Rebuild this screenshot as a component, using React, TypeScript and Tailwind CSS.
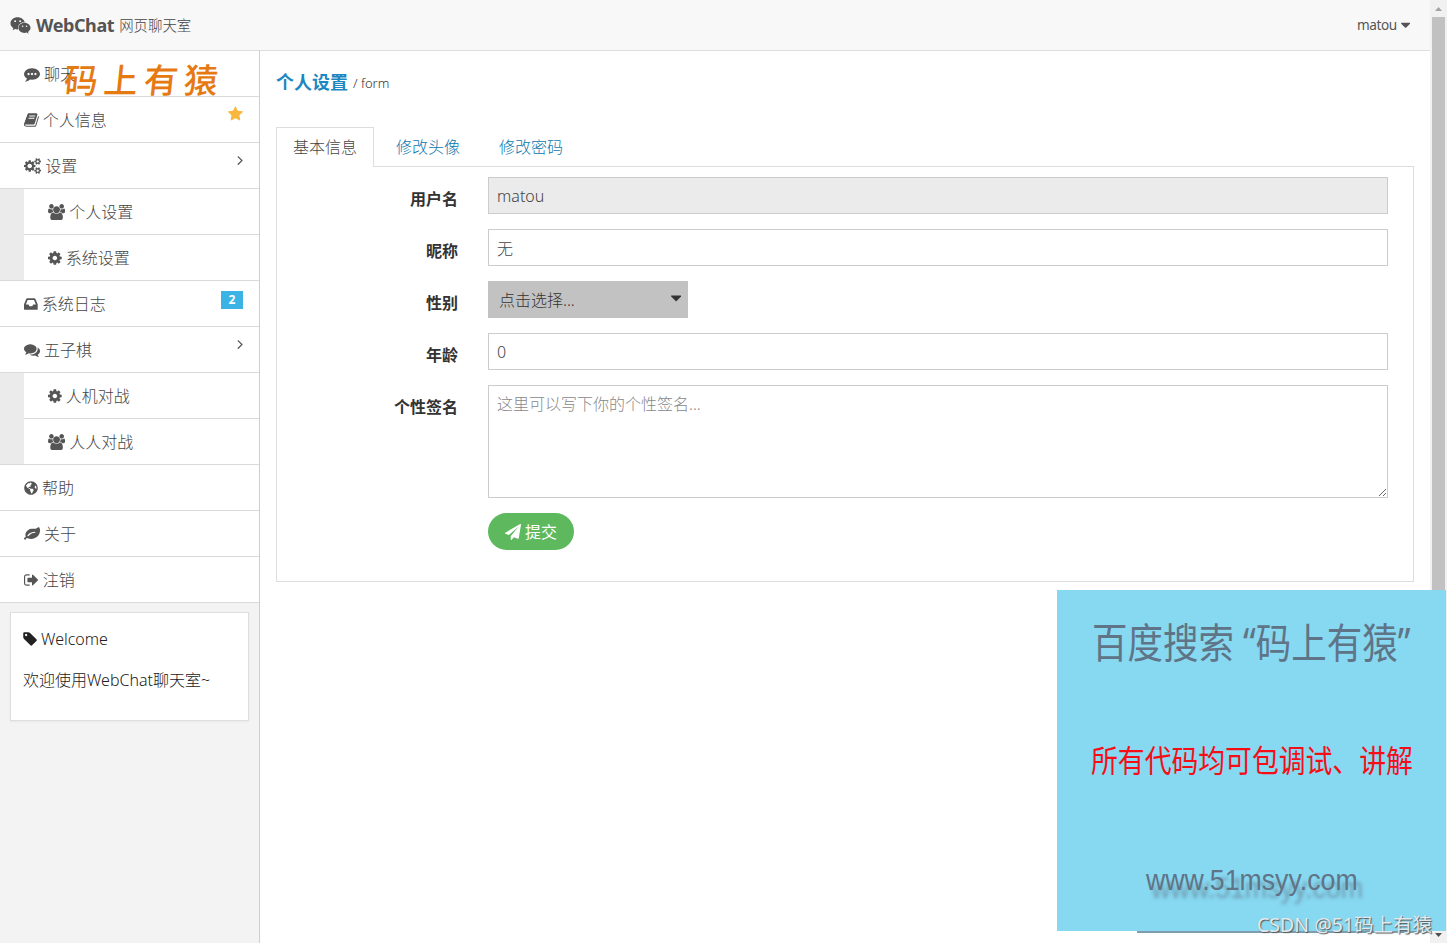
import type { ReactNode } from "react";
import { FaGlobeAmericas, FaWeixin } from "react-icons/fa";

interface IconShape {
  x: number;
  width: number;
  path: string;
}

// Glyphs share a 1792 unit em box, x and width give the advance of each one
const icons = {
  commenting: {
    x: 0,
    width: 1792,
    path: "M640 896q0-53-37.500-90.500t-90.500-37.500-90.500 37.500-37.500 90.500 37.500 90.500 90.500 37.500 90.500-37.500 37.500-90.500zm384 0q0-53-37.500-90.500t-90.500-37.500-90.500 37.500-37.500 90.500 37.500 90.500 90.500 37.500 90.500-37.500 37.500-90.500zm384 0q0-53-37.500-90.500t-90.500-37.500-90.500 37.500-37.500 90.500 37.500 90.500 90.500 37.500 90.500-37.500 37.500-90.500zm384 0q0 174-120 321.500t-326 233-450 85.500q-110 0-211-18-173 173-435 229-52 10-86 13-12 1-22-6t-13-18q-4-15 20-37 5-5 23.500-21.500t25.500-23.500 23.500-25.500 24-31.500 20.500-37 20-48 14.500-57.500 12.500-72.500q-146-90-229.500-216.500t-83.500-269.500q0-174 120-321.500t326-233 450-85.500 450 85.500 326 233 120 321.500z",
  },
  book: {
    x: 64,
    width: 1664,
    path: "M1703 478q40 57 18 129l-275 906q-19 64-76.500 107.500t-122.500 43.500h-923q-77 0-148.500-53.500t-99.500-131.500q-24-67-2-127 0-4 3-27t4-37q1-8-3-21.500t-3-19.500q2-11 8-21t16.500-23.500 16.500-23.500q23-38 45-91.500t30-91.500q3-10 .5-30t-.5-28q3-11 17-28t17-23q21-36 42-92t25-90q1-9-2.500-32t.5-28q4-13 22-30.500t22-22.500q19-26 42.500-84.500t27.500-96.500q1-8-3-25.500t-2-26.500q2-8 9-18t18-23 17-21q8-12 16.500-30.500t15-35 16-36 19.500-32 26.500-23.500 36-11.500 47.500 5.500l-1 3q38-9 51-9h761q74 0 114 56t18 130l-274 906q-36 119-71.500 153.500t-128.500 34.500h-869q-27 0-38 15-11 16-1 43 24 70 144 70h923q29 0 56-15.500t35-41.500l300-987q7-22 5-57 38 15 59 43zm-1064 2q-4 13 2 22.500t20 9.500h608q13 0 25.500-9.500t16.500-22.500l21-64q4-13-2-22.500t-20-9.500h-608q-13 0-25.500 9.500t-16.500 22.500zm-83 256q-4 13 2 22.500t20 9.500h608q13 0 25.500-9.500t16.500-22.500l21-64q4-13-2-22.500t-20-9.500h-608q-13 0-25.500 9.500t-16.500 22.500z",
  },
  cogs: {
    x: -64,
    width: 1920,
    path: "M832 896q0-106-75-181t-181-75-181 75-75 181 75 181 181 75 181-75 75-181zm768 512q0-52-38-90t-90-38-90 38-38 90q0 53 37.500 90.500t90.500 37.500 90.500-37.500 37.500-90.500zm0-1024q0-52-38-90t-90-38-90 38-38 90q0 53 37.500 90.500t90.500 37.500 90.500-37.500 37.500-90.500zm-384 421v185q0 10-7 19.500t-16 10.500l-155 24q-11 35-32 76 34 48 90 115 7 11 7 20 0 12-7 19-23 30-82.500 89.500t-78.500 59.500q-11 0-21-7l-115-90q-37 19-77 31-11 108-23 155-7 24-30 24h-186q-11 0-20-7.500t-10-17.500l-23-153q-34-10-75-31l-118 89q-7 7-20 7-11 0-21-8-144-133-144-160 0-9 7-19 10-14 41-53t47-61q-23-44-35-82l-152-24q-10-1-17-9.500t-7-19.500v-185q0-10 7-19.500t16-10.500l155-24q11-35 32-76-34-48-90-115-7-11-7-20 0-12 7-20 22-30 82-89t79-59q11 0 21 7l115 90q34-18 77-32 11-108 23-154 7-24 30-24h186q11 0 20 7.500t10 17.500l23 153q34 10 75 31l118-89q8-7 20-7 11 0 21 8 144 133 144 160 0 8-7 19-12 16-42 54t-45 60q23 48 34 82l152 23q10 2 17 10.500t7 19.500zm640 533v140q0 16-149 31-12 27-30 52 51 113 51 138 0 4-4 7-122 71-124 71-8 0-46-47t-52-68q-20 2-30 2t-30-2q-14 21-52 68t-46 47q-2 0-124-71-4-3-4-7 0-25 51-138-18-25-30-52-149-15-149-31v-140q0-16 149-31 13-29 30-52-51-113-51-138 0-4 4-7 4-2 35-20t59-34 30-16q8 0 46 46.500t52 67.500q20-2 30-2t30 2q51-71 92-112l6-2q4 0 124 70 4 3 4 7 0 25-51 138 17 23 30 52 149 15 149 31zm0-1024v140q0 16-149 31-12 27-30 52 51 113 51 138 0 4-4 7-122 71-124 71-8 0-46-47t-52-68q-20 2-30 2t-30-2q-14 21-52 68t-46 47q-2 0-124-71-4-3-4-7 0-25 51-138-18-25-30-52-149-15-149-31v-140q0-16 149-31 13-29 30-52-51-113-51-138 0-4 4-7 4-2 35-20t59-34 30-16q8 0 46 46.500t52 67.500q20-2 30-2t30 2q51-71 92-112l6-2q4 0 124 70 4 3 4 7 0 25-51 138 17 23 30 52 149 15 149 31z",
  },
  users: {
    x: 64,
    width: 1920,
    path: "M657 896q-162 5-265 128h-134q-82 0-138-40.500t-56-118.500q0-353 124-353 6 0 43.500 21t97.500 42.500 119 21.500q67 0 133-23-5 37-5 66 0 139 81 256zm1071 637q0 120-73 189.500t-194 69.500h-874q-121 0-194-69.500t-73-189.500q0-53 3.500-103.500t14-109 26.500-108.500 43-97.500 62-81 85.500-53.500 111.500-20q10 0 43 21.500t73 48 107 48 135 21.500 135-21.500 107-48 73-48 43-21.500q61 0 111.500 20t85.500 53.500 62 81 43 97.500 26.500 108.500 14 109 3.500 103.500zm-1024-1277q0 106-75 181t-181 75-181-75-75-181 75-181 181-75 181 75 75 181zm704 384q0 159-112.500 271.500t-271.500 112.500-271.500-112.500-112.500-271.500 112.500-271.500 271.500-112.500 271.500 112.500 112.500 271.500zm576 225q0 78-56 118.500t-138 40.500h-134q-103-123-265-128 81-117 81-256 0-29-5-66 66 23 133 23 59 0 119-21.500t97.500-42.500 43.500-21q124 0 124 353zm-128-609q0 106-75 181t-181 75-181-75-75-181 75-181 181-75 181 75 75 181z",
  },
  cog: {
    x: 128,
    width: 1536,
    path: "M1152 896q0-106-75-181t-181-75-181 75-75 181 75 181 181 75 181-75 75-181zm512-109v222q0 12-8 23t-20 13l-185 28q-19 54-39 91 35 50 107 138 10 12 10 25t-9 23q-27 37-99 108t-94 71q-12 0-26-9l-138-108q-44 23-91 38-16 136-29 186-7 28-36 28h-222q-14 0-24.500-8.500t-11.500-21.500l-28-184q-49-16-90-37l-141 107q-10 9-25 9-14 0-25-11-126-114-165-168-7-10-7-23 0-12 8-23 15-21 51-66.500t54-70.500q-27-50-41-99l-183-27q-13-2-21-12.500t-8-23.500v-222q0-12 8-23t19-13l186-28q14-46 39-92-40-57-107-138-10-12-10-24 0-10 9-23 26-36 98.500-107.500t94.500-71.500q13 0 26 10l138 107q44-23 91-38 16-136 29-186 7-28 36-28h222q14 0 24.500 8.500t11.500 21.500l28 184q49 16 90 37l142-107q9-9 24-9 13 0 25 10 129 119 165 170 7 8 7 22 0 12-8 23-15 21-51 66.500t-54 70.500q26 50 41 98l183 28q13 2 21 12.500t8 23.500z",
  },
  inbox: {
    x: 128,
    width: 1536,
    path: "M1151 960h316q-1-3-2.500-8.500t-2.500-7.500l-212-496h-708l-212 496q-1 3-2.500 8.500t-2.500 7.500h316l95 192h320zm513 30v482q0 26-19 45t-45 19h-1408q-26 0-45-19t-19-45v-482q0-62 25-123l238-552q10-25 36.500-42t52.500-17h832q26 0 52.500 17t36.500 42l238 552q25 61 25 123z",
  },
  comments: {
    x: 0,
    width: 1792,
    path: "M1408 768q0 139-94 257t-256.500 186.500-353.500 68.500q-86 0-176-16-124 88-278 128-36 9-86 16h-3q-11 0-20.500-8t-11.500-21q-1-3-1-6.500t.5-6.500 2-6l2.500-5 3.500-5.500 4-5 4.500-5 4-4.500q5-6 23-25t26-29.500 22.500-29 25-38.500 20.500-44q-124-72-195-177t-71-224q0-139 94-257t256.500-186.500 353.500-68.500 353.500 68.500 256.500 186.500 94 257zm384 256q0 120-71 224.500t-195 176.500q10 24 20.500 44t25 38.500 22.500 29 26 29.500 23 25q1 1 4 4.500t4.500 5 4 5 3.500 5.500l2.500 5 2 6 .5 6.500-1 6.500q-3 14-13 22t-22 7q-50-7-86-16-154-40-278-128-90 16-176 16-271 0-472-132 58 4 88 4 161 0 309-45t264-129q125-92 192-212t67-254q0-77-23-152 129 71 204 178t75 230z",
  },
  leaf: {
    x: 0,
    width: 1792,
    path: "M1280 704q0-26-19-45t-45-19q-172 0-318 49.500t-259.500 134-235.500 219.500q-19 21-19 45 0 26 19 45t45 19q24 0 45-19 27-24 74-71t67-66q137-124 268.500-176t313.500-52q26 0 45-19t19-45zm512-198q0 95-20 193-46 224-184.500 383t-357.500 268q-214 108-438 108-148 0-286-47-15-5-88-42t-96-37q-16 0-39.500 32t-45 70-52.500 70-60 32q-43 0-63.500-17.500t-45.500-59.500q-2-4-6-11t-5.500-10-3-9.500-1.500-13.500q0-35 31-73.500t68-65.500 68-56 31-48q0-4-14-38t-16-44q-9-51-9-104 0-115 43.500-220t119-184.500 170.500-139 204-95.500q55-18 145-25.500t179.500-9 178.500-6 163.500-24 113.500-56.500l29.500-29.500 29.500-28 27-20 36.500-16 43.500-4.500q39 0 70.500 46t47.500 112 24 124 8 96z",
  },
  signOut: {
    x: 64,
    width: 1664,
    path: "M704 1440q0 4 1 20t.5 26.500-3 23.500-10 19.500-20.500 6.500h-320q-119 0-203.500-84.500t-84.500-203.500v-704q0-119 84.500-203.500t203.500-84.500h320q13 0 22.500 9.500t9.500 22.500q0 4 1 20t.5 26.500-3 23.500-10 19.500-20.500 6.500h-320q-66 0-113 47t-47 113v704q0 66 47 113t113 47h312l11.500 1 11.500 3 8 5.500 7 9 2 13.500zm928-544q0 26-19 45l-544 544q-19 19-45 19t-45-19-19-45v-288h-448q-26 0-45-19t-19-45v-384q0-26 19-45t45-19h448v-288q0-26 19-45t45-19 45 19l544 544q19 19 19 45z",
  },
  tag: {
    x: 100,
    width: 1580,
    path: "M576 448q0-53-37.500-90.500t-90.500-37.500-90.500 37.500-37.500 90.500 37.500 90.500 90.500 37.500 90.500-37.500 37.500-90.500zm1067 576q0 53-37 90l-491 492q-39 37-91 37-53 0-90-37l-715-716q-38-37-64.500-101t-26.500-117v-416q0-52 38-90t90-38h416q53 0 117 26.500t102 64.500l715 714q37 39 37 91z",
  },
  paperPlane: {
    x: 0,
    width: 1792,
    path: "M1764 11q33 24 27 64l-256 1536q-5 29-32 45-14 8-31 8-11 0-24-5l-453-185-242 295q-18 23-49 23-13 0-22-4-19-7-30.500-23.500t-11.500-36.500v-349l864-1059-1069 925-395-162q-37-14-40-55-2-40 32-59l1664-960q15-9 32-9 20 0 36 11z",
  },
  star: {
    x: 64,
    width: 1664,
    path: "M1728 647q0 22-26 48l-363 354 86 500q1 7 1 20 0 21-10.500 35.500t-30.500 14.500q-19 0-40-12l-449-236-449 236q-22 12-40 12-21 0-31.500-14.500t-10.500-35.500q0-6 2-20l86-500-364-354q-25-27-25-48 0-37 56-46l502-73 225-455q19-41 49-41t49 41l225 455 502 73q56 9 56 46z",
  },
  angleRight: {
    x: 536,
    width: 686,
    path: "M1171 960q0 13-10 23l-466 466q-10 10-23 10t-23-10l-50-50q-10-10-10-23t10-23l393-393-393-393q-10-10-10-23t10-23l50-50q10-10 23-10t23 10l466 466q10 10 10 23z",
  },
  caretDown: {
    x: 384,
    width: 1024,
    path: "M1408 704q0 26-19 45l-448 448q-19 19-45 19t-45-19l-448-448q-19-19-19-45t19-45 45-19h896q26 0 45 19t19 45z",
  },
} satisfies Record<string, IconShape>;

type IconName = keyof typeof icons;

function Icon({ name, size = 16 }: { name: IconName; size?: number }) {
  const { x, width, path } = icons[name];
  return (
    <svg
      viewBox={`${x} 0 ${width} 1792`}
      width={(width * size) / 1792}
      height={size}
      fill="currentColor"
      className="shrink-0"
    >
      <path d={path} />
    </svg>
  );
}

interface MenuItem {
  icon: IconName | "globe";
  label: string;
  extra?: ReactNode;
  children?: MenuItem[];
}

const arrow = (
  <span className="mb-3">
    <Icon name="angleRight" />
  </span>
);

const menu: MenuItem[] = [
  { icon: "commenting", label: "聊天" },
  {
    icon: "book",
    label: "个人信息",
    extra: (
      <span className="mb-3 text-[#f8b73e]">
        <Icon name="star" />
      </span>
    ),
  },
  {
    icon: "cogs",
    label: "设置",
    extra: arrow,
    children: [
      { icon: "users", label: "个人设置" },
      { icon: "cog", label: "系统设置" },
    ],
  },
  {
    icon: "inbox",
    label: "系统日志",
    extra: (
      <span className="mb-2 flex h-[18px] w-[22px] items-center justify-center bg-[#3bb4e5] text-xs font-bold text-white">
        2
      </span>
    ),
  },
  {
    icon: "comments",
    label: "五子棋",
    extra: arrow,
    children: [
      { icon: "cog", label: "人机对战" },
      { icon: "users", label: "人人对战" },
    ],
  },
  { icon: "globe", label: "帮助" },
  { icon: "leaf", label: "关于" },
  { icon: "signOut", label: "注销" },
];

function MenuRow({ item }: { item: MenuItem }) {
  return (
    <li>
      <a className="flex h-[46px] items-center justify-between border-b border-[#dadada] bg-white pr-4 pl-6 text-[#555]">
        <span className="flex items-center gap-1">
          {item.icon === "globe" ? (
            <FaGlobeAmericas size={14} />
          ) : (
            <Icon name={item.icon} />
          )}
          <span className="text-[#444]">{item.label}</span>
        </span>
        {item.extra}
      </a>
      {item.children && (
        <ul className="border-b border-[#dadada] bg-[#ebebeb] pl-6 [&>li:last-child>a]:h-[45px] [&>li:last-child>a]:border-b-0">
          {item.children.map((child) => (
            <MenuRow key={child.label} item={child} />
          ))}
        </ul>
      )}
    </li>
  );
}

function FormRow({ label, children }: { label: string; children: ReactNode }) {
  return (
    <div className="flex gap-[30px]">
      <label className="w-[181px] shrink-0 pt-2.5 text-right leading-6 font-bold text-[#333]">
        {label}
      </label>
      <div className="flex flex-1">{children}</div>
    </div>
  );
}

function Header() {
  return (
    <header className="flex h-[51px] shrink-0 items-center justify-between border-b border-[#ddd] bg-[#f8f8f8] pr-5 pl-2.5 text-[#555]">
      <div className="flex items-center">
        <FaWeixin size={21} />
        <strong className="ml-[5px] text-[18px] font-bold tracking-[-0.4px]">
          WebChat
        </strong>
        <span className="mt-0.5 ml-[5px] text-[14.4px] text-[#444]">
          网页聊天室
        </span>
      </div>
      <div className="flex items-center gap-1 text-[13.6px] tracking-[-0.4px]">
        <span className="font-normal">matou</span>
        <Icon name="caretDown" />
      </div>
    </header>
  );
}

function Sidebar() {
  return (
    <aside className="w-[260px] shrink-0 border-r border-[#cecece] bg-[#f3f3f3]">
      <ul>
        {menu.map((item) => (
          <MenuRow key={item.label} item={item} />
        ))}
      </ul>
      <div className="mt-[9px] mr-2.5 ml-2.5 h-[109px] border border-[#dedede] bg-white px-3 pt-3.5 text-[#222] shadow-xs">
        <p className="flex items-center gap-1 leading-6">
          <Icon name="tag" />
          <span>Welcome</span>
        </p>
        <p className="mt-[17px] leading-6">欢迎使用WebChat聊天室~</p>
      </div>
    </aside>
  );
}

function SettingsForm() {
  return (
    <form className="flex h-[416px] flex-col gap-[15px] border border-[#ddd] pt-2.5 pr-[25px]">
      <FormRow label="用户名">
        <input
          disabled
          defaultValue="matou"
          className="h-[37px] flex-1 border border-[#ccc] bg-[#ebebeb] px-2 text-[#444]"
        />
      </FormRow>
      <FormRow label="昵称">
        <input
          defaultValue="无"
          className="h-[37px] flex-1 border border-[#ccc] px-2 text-[#444]"
        />
      </FormRow>
      <FormRow label="性别">
        <button
          type="button"
          className="flex h-[37px] w-[200px] items-center justify-between bg-[#c2c2c2] pr-[7px] pl-[11px] text-[#333]"
        >
          <span>点击选择...</span>
          <span className="mb-1">
            <Icon name="caretDown" size={18} />
          </span>
        </button>
      </FormRow>
      <FormRow label="年龄">
        <input
          defaultValue="0"
          className="h-[37px] flex-1 border border-[#ccc] px-2 text-[#444]"
        />
      </FormRow>
      <FormRow label="个性签名">
        <textarea
          placeholder="这里可以写下你的个性签名..."
          className="h-[113px] flex-1 border border-[#ccc] px-2 py-1.5 placeholder:text-[#888]"
        />
      </FormRow>
      <div className="flex pl-[211px]">
        <button
          type="button"
          className="flex h-[37px] w-[86px] items-center justify-center gap-1 rounded-full bg-[#5eb95e] font-normal text-white"
        >
          <Icon name="paperPlane" />
          <span>提交</span>
        </button>
      </div>
    </form>
  );
}

function Content() {
  return (
    <main className="flex-1 pt-[18px] pr-4 pl-4">
      <div className="flex h-[27px] items-center text-[#333]">
        <strong className="text-[18px] font-bold text-[#1c87c0]">
          个人设置
        </strong>
        <small className="mt-0.5 ml-[5px] text-[13px]">/ form</small>
      </div>
      <div className="mt-[31px] flex gap-[5px]">
        <a className="-mb-px h-10 w-[98px] border border-b-0 border-[#ddd] bg-white pt-[7px] text-center text-[#444]">
          基本信息
        </a>
        <a className="w-[98px] pt-2 text-center text-[#0b76ad]">修改头像</a>
        <a className="w-[98px] pt-2 text-center text-[#0b76ad]">修改密码</a>
      </div>
      <SettingsForm />
    </main>
  );
}

function Scrollbar() {
  return (
    <div className="flex w-[17px] shrink-0 flex-col items-center bg-[#f1f1f1]">
      <div className="flex h-[17px] items-center">
        <svg width="7" height="4" fill="#a3a3a3">
          <path d="M0 4 3.500 0 7 4z" />
        </svg>
      </div>
      <div className="w-[13px] flex-1 bg-[#c1c1c1]" />
      <div className="flex h-[17px] items-center">
        <svg width="7" height="4" fill="#505050">
          <path d="M0 0 3.500 4 7 0z" />
        </svg>
      </div>
    </div>
  );
}

function Banner() {
  return (
    <div className="absolute top-[590px] left-[1057px] h-[341px] w-[389px] bg-[#87d8f1] font-normal whitespace-nowrap text-[#5f7486]">
      <p className="mt-[22px] ml-[35px] origin-left scale-x-[.865] text-[41px] leading-[60px]">
        百度搜索 “码上有猿”
      </p>
      <p className="mt-[63px] ml-[34px] origin-left scale-x-[.865] text-[31px] leading-[50px] text-[#f40f17]">
        所有代码均可包调试、讲解
      </p>
      <p className="mt-[75px] ml-[89px] origin-left scale-x-[.89] font-['Liberation_Sans',sans-serif] text-[30px] leading-10 [text-shadow:6px_8px_4px_#5f748699]">
        www.51msyy.com
      </p>
    </div>
  );
}

export default function App() {
  return (
    <div className="relative flex h-[943px] w-[1447px] overflow-hidden bg-white font-['Noto_Sans','Noto_Sans_CJK_SC',sans-serif] text-base font-light">
      <div className="flex flex-1 flex-col">
        <Header />
        <div className="flex flex-1">
          <Sidebar />
          <Content />
        </div>
      </div>
      <Scrollbar />
      <div className="absolute top-[56px] left-[64px] -skew-x-6 text-[34px] leading-[48px] font-medium tracking-[6px] text-[#e67a12]">
        码上有猿
      </div>
      <Banner />
      <div className="absolute top-[931px] left-[1137px] h-0.5 w-[295px] bg-[#7f9dac]" />
      <div className="absolute top-[911px] left-[1257px] text-[19.500px] leading-7 font-normal whitespace-nowrap text-[#e2e8ec] [text-shadow:1px_1px_1px_#555]">
        CSDN @51码上有猿
      </div>
    </div>
  );
}
